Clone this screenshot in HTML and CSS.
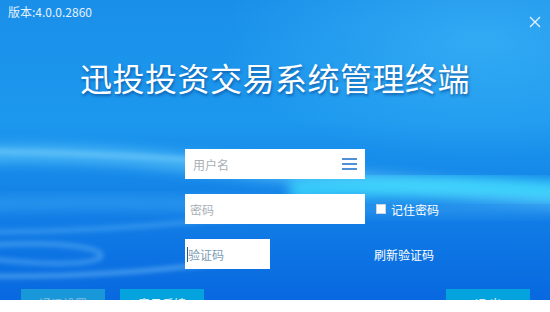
FILE: index.html
```html
<!DOCTYPE html>
<html lang="zh-CN">
  <head>
    <meta charset="UTF-8" />
    <title>迅投投资交易系统管理终端</title>
    <link rel="stylesheet" href="styles.css">
  </head>
  <body>
    <div class="window">
      <div class="topbar">
        <span class="version">版本:4.0.0.2860</span>
        <span class="close">
          <svg width="12" height="12" viewBox="0 0 12 12">
            <path d="M1 1 L11 11 M11 1 L1 11" stroke="#e6f3ff" stroke-width="1.3" fill="none" />
          </svg>
        </span>
      </div>
      <h1 class="title">迅投投资交易系统管理终端</h1>
      <form class="login">
        <div class="field user">
          <span class="placeholder">用户名</span>
          <span class="menu-icon"><i></i><i></i><i></i></span>
        </div>
        <div></div>
        <div class="field pass">
          <span class="placeholder">密码</span>
        </div>
        <label class="remember"><span class="box"></span>记住密码</label>
        <div class="field captcha">
          <span class="caret"></span><span class="captcha-text">验证码</span>
        </div>
        <a class="refresh">刷新验证码</a>
      </form>
      <div class="actions">
        <button type="button" class="btn disabled">通讯设置</button>
        <button type="button" class="btn">意见反馈</button>
        <span class="spacer"></span>
        <button type="button" class="btn">退 出</button>
      </div>
    </div>
  </body>
</html>
```

FILE: styles.css
```css
body {
  margin: 0;
  background: white;
  font-family: "Noto Sans CJK SC", "Liberation Sans", sans-serif;
}
.window {
  width: 550px;
  height: 300px;
  overflow: hidden;
  color: white;
  background-image:
    url("data:image/svg+xml,%3Csvg xmlns='http://www.w3.org/2000/svg' width='550' height='300'%3E%3Cdefs%3E%3Cfilter id='b' x='-20%25' y='-200%25' width='140%25' height='500%25'%3E%3CfeGaussianBlur stdDeviation='6'/%3E%3C/filter%3E%3Cfilter id='s' x='-20%25' y='-200%25' width='140%25' height='500%25'%3E%3CfeGaussianBlur stdDeviation='2.5'/%3E%3C/filter%3E%3C/defs%3E%3Cpath d='M-20 154 C120 150 220 168 330 178 C420 186 480 192 570 198' stroke='%2370d8ff' stroke-opacity='0.5' stroke-width='18' fill='none' filter='url(%23b)'/%3E%3Cpath d='M290 190 C400 184 480 186 570 192' stroke='%2340e0ff' stroke-opacity='0.75' stroke-width='20' fill='none' filter='url(%23b)'/%3E%3Cpath d='M-20 205 C150 198 300 212 570 208' stroke='%2360c8ff' stroke-opacity='0.3' stroke-width='12' fill='none' filter='url(%23b)'/%3E%3Cpath d='M-20 151 C150 153 260 166 360 172' stroke='%23a0e4ff' stroke-opacity='0.5' stroke-width='3' fill='none' filter='url(%23s)'/%3E%3Cpath d='M-20 246 C60 240 110 248 100 258 C80 268 20 262 -20 258' stroke='%2390d8ff' stroke-opacity='0.4' stroke-width='4' fill='none' filter='url(%23s)'/%3E%3Cpath d='M-20 276 C80 278 160 270 230 262' stroke='%23a8e8ff' stroke-opacity='0.55' stroke-width='3' fill='none' filter='url(%23s)'/%3E%3Cpath d='M-20 232 C100 232 200 222 290 212' stroke='%2380d0ff' stroke-opacity='0.3' stroke-width='5' fill='none' filter='url(%23s)'/%3E%3C/svg%3E"),
    radial-gradient(ellipse 260px 120px at 480px 40px, rgba(70, 190, 250, 0.55), transparent),
    linear-gradient(180deg, #1a8fe9 0%, #1c98ee 40%, #127fe6 70%, #0868e0 100%);
}
.topbar {
  display: flex;
  justify-content: space-between;
  height: 28px;
}
.version {
  font-size: 12px;
  line-height: 14px;
  padding: 5px 0 0 8px;
  color: #e4f1ff;
}
.close {
  margin: 9px 9px 0 0;
  height: 12px;
}
.title {
  margin: 29px 0 0;
  font-size: 32px;
  line-height: 40px;
  font-weight: normal;
  text-align: center;
  letter-spacing: 0.5px;
  text-shadow: 1px 2px 3px rgba(0, 50, 120, 0.55);
}
.login {
  display: grid;
  grid-template-columns: 180px auto;
  column-gap: 9px;
  row-gap: 15px;
  margin: 52px 0 0 185px;
  font-size: 12px;
}
.field {
  height: 30px;
  background: white;
  display: flex;
  align-items: center;
  box-sizing: border-box;
}
.placeholder {
  color: #a9afb5;
}
.user {
  padding: 0 8px;
  justify-content: space-between;
}
.pass {
  padding-left: 5px;
}
.menu-icon {
  display: flex;
  flex-direction: column;
  gap: 3px;
}
.menu-icon i {
  width: 15px;
  height: 2px;
  background: #4d90d6;
}
.remember {
  display: flex;
  align-items: center;
  margin-left: 2px;
}
.box {
  flex: none;
  width: 10px;
  height: 10px;
  background: #ffffff;
  border: 1px solid #c8d6e4;
  box-sizing: border-box;
  margin-right: 5px;
}
.captcha {
  width: 85px;
  padding-left: 2px;
}
.caret {
  width: 1px;
  height: 15px;
  background: #1b5f9c;
}
.captcha-text {
  color: #7c9cb4;
}
.refresh {
  align-self: center;
  color: white;
}
.actions {
  display: flex;
  gap: 15px;
  margin-top: 20px;
  padding: 0 20px 0 21px;
}
.spacer {
  flex: 1;
}
.btn {
  width: 84px;
  height: 28px;
  border: none;
  background: #05a3de;
  color: #e8f6ff;
  font-family: inherit;
  font-size: 12px;
}
.btn.disabled {
  background: #1898d9;
  color: #86b9de;
}
```
